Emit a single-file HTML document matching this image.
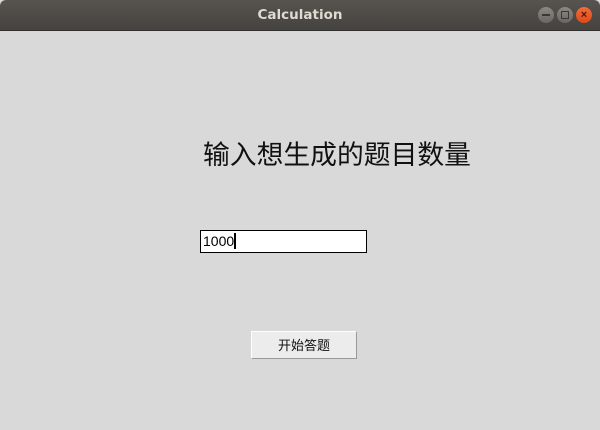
<!DOCTYPE html>
<html><head><meta charset="utf-8"><style>
body{margin:0;width:600px;height:430px;background:#d9d9d9;overflow:hidden;position:relative;font-family:"Liberation Sans","Noto Sans CJK SC",sans-serif}
.tb{position:absolute;left:0;top:0;width:600px;height:30px;background:linear-gradient(#57544f,#45433f);border-radius:6px 6px 0 0;border-bottom:1px solid #2f2e2b}
.tt{position:absolute;left:0;width:600px;top:7px;text-align:center;color:#dfdbd2;font-weight:bold;font-size:13.5px;font-family:"DejaVu Sans",sans-serif}
.b{position:absolute;top:7px;width:16px;height:16px;border-radius:50%;background:linear-gradient(#8b8882,#6a6762)}
.h{position:absolute;left:203px;top:134px;font-size:26.8px;color:#111;white-space:nowrap;font-family:"Noto Sans CJK SC",sans-serif;line-height:38px}
.in{position:absolute;left:200px;top:230px;width:163px;height:21px;border:1px solid #000;background:#fff;font-size:14px;line-height:21px;padding-left:2px}
.btn{position:absolute;left:251px;top:331px;width:104px;height:26px;background:#ececec;border:1px solid #fff;border-right-color:#9a9a9a;border-bottom-color:#9a9a9a;text-align:center;line-height:26px;font-size:13px;font-family:"Noto Sans CJK SC",sans-serif;color:#111}
</style></head><body>
<div class="tb"><div class="tt">Calculation</div>
<div class="b" style="left:538px"><div style="position:absolute;left:4px;top:7px;width:8px;height:1.5px;background:#3a3835"></div></div>
<div class="b" style="left:557px"><div style="position:absolute;left:4px;top:4px;width:6px;height:6px;border:1.5px solid #3a3835"></div></div>
<div class="b" style="left:576px;background:linear-gradient(#f26b3a,#df4a16)"><div style="position:absolute;left:0;top:0;width:16px;text-align:center;font-size:11px;line-height:16px;color:#4a1a08;font-weight:bold">×</div></div>
</div>
<div class="h">输入想生成的题目数量</div>
<div class="in">1000<span style="display:inline-block;width:2px;height:16px;background:#000;vertical-align:-3px"></span></div>
<div class="btn">开始答题</div>
</body></html>
